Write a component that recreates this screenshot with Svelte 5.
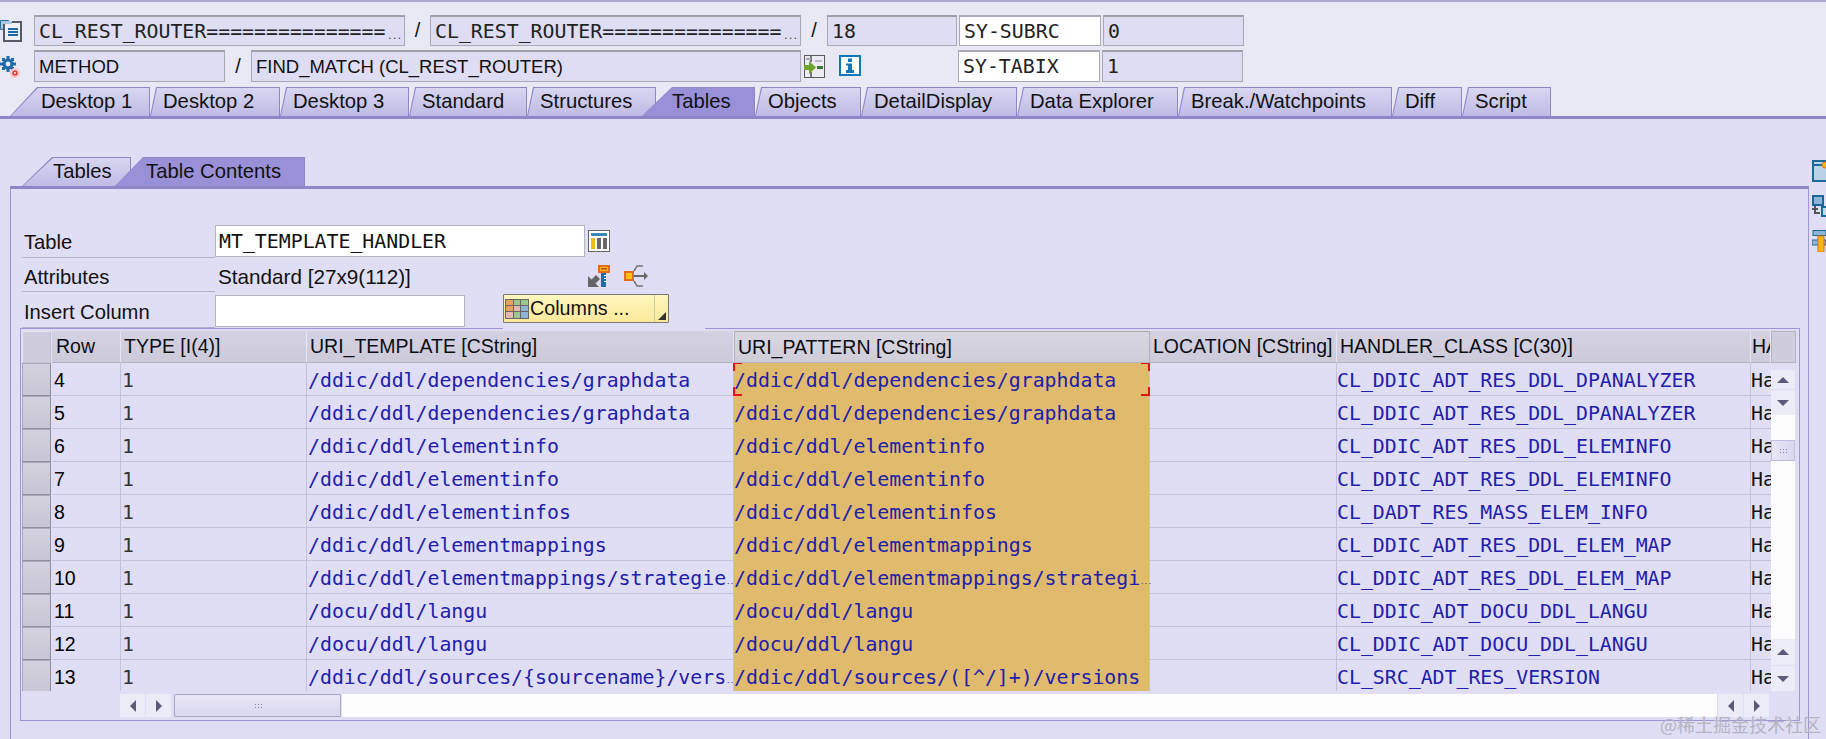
<script>
  const tabs = ['Desktop 1','Desktop 2','Desktop 3','Standard','Structures','Tables','Objects','DetailDisplay','Data Explorer','Break./Watchpoints','Diff','Script'];
  const columns = [
    { key: 'row', label: 'Row' },
    { key: 'type', label: 'TYPE [I(4)]' },
    { key: 'tpl', label: 'URI_TEMPLATE [CString]' },
    { key: 'pat', label: 'URI_PATTERN [CString]' },
    { key: 'loc', label: 'LOCATION [CString]' },
    { key: 'cls', label: 'HANDLER_CLASS [C(30)]' },
    { key: 'ha', label: 'HA' }
  ];
  const rows = [
    [4,'/ddic/ddl/dependencies/graphdata','/ddic/ddl/dependencies/graphdata','CL_DDIC_ADT_RES_DDL_DPANALYZER'],
    [5,'/ddic/ddl/dependencies/graphdata','/ddic/ddl/dependencies/graphdata','CL_DDIC_ADT_RES_DDL_DPANALYZER'],
    [6,'/ddic/ddl/elementinfo','/ddic/ddl/elementinfo','CL_DDIC_ADT_RES_DDL_ELEMINFO'],
    [7,'/ddic/ddl/elementinfo','/ddic/ddl/elementinfo','CL_DDIC_ADT_RES_DDL_ELEMINFO'],
    [8,'/ddic/ddl/elementinfos','/ddic/ddl/elementinfos','CL_DADT_RES_MASS_ELEM_INFO'],
    [9,'/ddic/ddl/elementmappings','/ddic/ddl/elementmappings','CL_DDIC_ADT_RES_DDL_ELEM_MAP'],
    [10,'/ddic/ddl/elementmappings/strategie.','/ddic/ddl/elementmappings/strategi.','CL_DDIC_ADT_RES_DDL_ELEM_MAP'],
    [11,'/docu/ddl/langu','/docu/ddl/langu','CL_DDIC_ADT_DOCU_DDL_LANGU'],
    [12,'/docu/ddl/langu','/docu/ddl/langu','CL_DDIC_ADT_DOCU_DDL_LANGU'],
    [13,'/ddic/ddl/sources/{sourcename}/vers.','/ddic/ddl/sources/([^/]+)/versions','CL_SRC_ADT_RES_VERSION']
  ];
  const cut = (s) => s.endsWith('.');
  const body = (s) => (cut(s) ? s.slice(0, -1) : s);
</script>

<div class="page">
  <header class="top">
    <div class="line one">
      <svg class="ic i1" width="22" height="22" viewBox="0 0 22 22"><path d="M0.500 0.500h8l-6 9h-2z" fill="#a9c9e4" stroke="#2a6f9e"/><rect x="4" y="2" width="17" height="19" fill="#f0f0f6" stroke="#555a66" stroke-width="2"/><rect x="3" y="1" width="9" height="3" fill="#a9c9e4"/><rect x="8" y="8" width="10" height="2" fill="#1f6aa8"/><rect x="8" y="11" width="10" height="2" fill="#1f6aa8"/><rect x="8" y="14" width="10" height="2" fill="#1f6aa8"/></svg>
      <div class="f w371">CL_REST_ROUTER===============<i>...</i></div>
      <span class="sl s1">/</span>
      <div class="f w371">CL_REST_ROUTER===============<i>...</i></div>
      <span class="sl s2">/</span>
      <div class="f w130">18</div>
      <div class="f w142 white">SY-SUBRC</div>
      <div class="f w141">0</div>
    </div>
    <div class="line two">
      <svg class="ic i2" width="22" height="24" viewBox="0 0 22 24"><g fill="#1f6aa8"><circle cx="8" cy="8" r="5.500"/><rect x="6.500" y="0" width="3" height="16"/><rect x="0" y="6.500" width="16" height="3"/><rect x="2" y="2" width="3" height="3"/><rect x="11" y="2" width="3" height="3"/><rect x="2" y="11" width="3" height="3"/><rect x="11" y="11" width="3" height="3"/></g><circle cx="8" cy="8" r="2.400" fill="#e9e8f5"/><circle cx="15" cy="17" r="5" fill="#f6c6c6"/><circle cx="15" cy="17" r="2.600" fill="#d42a2a"/><path d="M13.800 17h2.400M15 15.800v2.400" stroke="#fff"/></svg>
      <div class="f w191">METHOD</div>
      <span class="sl s3">/</span>
      <div class="f w551 sans">FIND_MATCH (CL_REST_ROUTER)</div>
      <svg class="ic2" width="21" height="23" viewBox="0 0 21 23"><rect x="0.500" y="0.500" width="20" height="22" fill="#ececf2" stroke="#5a5a5a"/><path d="M7 1v6M7 17v5" stroke="#777" stroke-width="2"/><path d="M2 4h5" stroke="#aaa" stroke-width="2"/><rect x="11" y="5" width="7" height="2" fill="#bbb"/><rect x="13" y="11" width="6" height="3" fill="#3c7a3c"/><path d="M0 10h5V6l7 6.500-7 6.500v-4H0z" fill="#6fa52c"/></svg>
      <svg class="ic3" width="22" height="21" viewBox="0 0 22 21"><rect x="1" y="1" width="20" height="19" fill="#fff" stroke="#0f78bd" stroke-width="2"/><rect x="9" y="3.500" width="4" height="3.500" fill="#0f78bd"/><path d="M7 8.500h6V15h2v3H7v-3h2v-4.500H7z" fill="#0f78bd"/></svg>
      <div class="f w142 white gap87">SY-TABIX</div>
      <div class="f w141">1</div>
    </div>
  </header>

  <nav class="tabs">
    {#each tabs as t, i}
      <div class="tab" class:first={i===0} class:active={t==='Tables'}><span>{t}</span></div>
    {/each}
  </nav>
  <div class="rule"></div>

  <main class="body">
    <div class="left">
      <div class="subtabs">
        <div class="tab first"><span>Tables</span></div>
        <div class="tab active"><span>Table Contents</span></div>
      </div>
      <section class="panel">
        <div class="form">
          <div class="lab">Table</div>
          <div class="formcell">
            <div class="input w371b">MT_TEMPLATE_HANDLER</div>
            <svg class="tblic" width="22" height="22" viewBox="0 0 22 22"><rect x="0.500" y="0.500" width="21" height="21" fill="#fff" stroke="#666"/><rect x="3" y="3" width="16" height="3" fill="#3d87b8"/><rect x="3" y="8" width="4" height="11" fill="#f6b914"/><rect x="9" y="8" width="4" height="11" fill="#666"/><rect x="15" y="8" width="4" height="11" fill="#666"/></svg>
          </div>
          <div class="lab">Attributes</div>
          <div class="formcell">
            <span class="attr">Standard [27x9(112)]</span>
            <svg class="keyic" width="22" height="22" viewBox="0 0 22 22"><path d="M0 22V11l3.500 3.500L8 10l4 4-4.500 4.500L11 22z" fill="#666"/><rect x="11" y="1" width="10" height="6" fill="#f6b914" stroke="#e36b1e" stroke-width="2"/><rect x="13" y="3" width="6" height="1.500" fill="#b5501a"/><rect x="13" y="8" width="5" height="14" fill="#1f6aa8"/><path d="M16 10.500h2M16 13.500h2M16 16.500h2" stroke="#fff"/></svg>
            <svg class="arrowic" width="24" height="22" viewBox="0 0 24 22"><rect x="1" y="7" width="8" height="8" fill="#f6c414" stroke="#e36b1e" stroke-width="2"/><path d="M10 10h10V7l4 4-4 4v-3H10z" fill="#666"/><path d="M10 6l3-5h6M10 16l3 5h6" fill="none" stroke="#777" stroke-width="1.500"/></svg>
          </div>
          <div class="lab">Insert Column</div>
          <div class="formcell">
            <div class="input w250"></div>
            <div class="colbtn">
              <svg width="24" height="20" viewBox="0 0 24 20"><rect width="24" height="20" fill="#666"/><g fill="#e9a15b"><rect x="1" y="1" width="7" height="5"/><rect x="1" y="7" width="7" height="5"/></g><g fill="#9cc68e"><rect x="9" y="1" width="6" height="5"/><rect x="16" y="1" width="7" height="5"/></g><g fill="#e6b8b0"><rect x="9" y="7" width="6" height="5"/><rect x="1" y="13" width="7" height="6"/></g><g fill="#8eb4d6"><rect x="16" y="7" width="7" height="5"/><rect x="16" y="13" width="7" height="6"/></g><rect x="9" y="13" width="6" height="6" fill="#9cc68e"/></svg>
              <span>Columns ...</span>
              <b class="drop"></b>
            </div>
          </div>
        </div>

        <div class="group">
          <div class="gridwrap">
            <div class="table">
              <div class="thead">
                <div class="sel h"></div>
                {#each columns as c}
                  <div class="th {c.key}">{c.label}</div>
                {/each}
              </div>
              <div class="tbody">
                {#each rows as r, i}
                  <div class="tr">
                    <div class="sel"></div>
                    <div class="td row">{r[0]}</div>
                    <div class="td type mono">1</div>
                    <div class="td tpl mono blue">{body(r[1])}{#if cut(r[1])}<small>...</small>{/if}</div>
                    <div class="td pat mono blue">{body(r[2])}{#if cut(r[2])}<small>...</small>{/if}{#if i===0}<em class="c tl"></em><em class="c tr2"></em><em class="c bl"></em><em class="c br"></em>{/if}</div>
                    <div class="td loc"></div>
                    <div class="td cls mono blue">{r[3]}</div>
                    <div class="td ha mono">Ha</div>
                  </div>
                {/each}
              </div>
            </div>
            <div class="hscroll">
              <div class="sb"><b class="al"></b></div>
              <div class="sb"><b class="ar"></b></div>
              <div class="thumb"><i></i></div>
              <div class="track"></div>
              <div class="sb"><b class="al"></b></div>
              <div class="sb"><b class="ar"></b></div>
            </div>
          </div>
          <aside class="vscroll">
            <div class="vhead"></div>
            <div class="vb up"><b class="au"></b></div>
            <div class="vb dn"><b class="ad"></b></div>
            <div class="vtrack"><div class="vthumb"><i></i></div></div>
            <div class="vb up"><b class="au"></b></div>
            <div class="vb dn"><b class="ad"></b></div>
          </aside>
        </div>
      </section>
    </div>
    <aside class="side">
      <svg width="14" height="22" viewBox="0 0 14 22"><rect x="1" y="1" width="20" height="20" fill="#b9d2e8" stroke="#1a6a98" stroke-width="2"/><rect x="1" y="4" width="9" height="2" fill="#1a6a98"/><circle cx="13" cy="5" r="3" fill="#f6b914" stroke="#e36b1e"/></svg>
      <svg width="14" height="22" viewBox="0 0 14 22"><rect x="1" y="1" width="10" height="9" fill="#8fb3d9" stroke="#1a6a98" stroke-width="2"/><path d="M0 14h6M3 11v7h5" stroke="#555" stroke-width="2" fill="none"/><rect x="10" y="12" width="6" height="9" fill="#c4d8ea" stroke="#1a6a98" stroke-width="2"/></svg>
      <svg width="14" height="22" viewBox="0 0 14 22"><rect x="1" y="0.500" width="13" height="5" fill="#8fb3d9" stroke="#1a6a98"/><rect x="0" y="10" width="14" height="5" fill="#8fb3d9" stroke="#1a6a98"/><rect x="6" y="6" width="6" height="16" fill="#f6b914" stroke="#e36b1e"/></svg>
    </aside>
  </main>
  <div class="mark">@稀土掘金技术社区</div>
</div>

<style>
  :global(body){margin:0;background:#e0def5;overflow:hidden}
  .page{position:relative;width:1826px;height:739px;overflow:hidden;background:#e0def5;font-family:"Liberation Sans",Arial,sans-serif;font-size:18px;color:#111;display:flex;flex-direction:column}
  .mono{font-family:"DejaVu Sans Mono",monospace;font-size:19.85px}

  .top{background:#e9e8f5;border-top:2px solid #b0a9d0;height:87px;box-sizing:border-box;padding-top:13px;display:flex;flex-direction:column;gap:4px;flex:none}
  .line{display:flex;align-items:stretch}
  .one{height:31px}
  .two{height:32px}
  .ic,.ic2,.ic3{flex:none}
  .ic{margin-right:12px}
  .i1{margin-top:5px}
  .i2{margin-top:6px}
  .f{box-sizing:border-box;height:100%;background:#dfddf3;border:1px solid #a9a8b6;border-top:2px solid #a0a0a8;padding-left:4px;display:flex;align-items:center;font-family:"DejaVu Sans Mono",monospace;font-size:19.85px;white-space:nowrap;color:#222;overflow:hidden;flex:none}
  .f i{font-style:normal;font-size:8px;align-self:flex-end;margin:0 0 4px 2px}
  .white{background:#fff;margin-left:2px;border-color:#a9a8b6}
  .w371{width:371px}
  .w130{width:130px}
  .w142{width:142px}
  .w141{width:141px;margin-left:2px}
  .w191{width:191px;font-family:"Liberation Sans",sans-serif;font-size:18.5px;color:#111}
  .w551{width:550px}
  .sans{font-family:"Liberation Sans",sans-serif;font-size:18.5px;color:#111}
  .sl{flex:none;display:flex;align-items:center;justify-content:center;font-size:20px}
  .s1{width:25px}
  .s2,.s3{width:26px}
  .ic2{margin:5px 0 0 3px}
  .ic3{margin:5px 0 0 14px}
  .gap87{margin-left:97px}

  .tabs{display:grid;grid-template-columns:140px 130px 129px 118px 129px 99px 106px 156px 161px 214px 70px 89px;padding-left:10px;height:29px;flex:none;background:#e9e8f5}
  .tab{position:relative;display:flex;align-items:center;padding-left:13px;white-space:nowrap;font-size:20.25px}
  .tab span{position:relative;z-index:2}
  .tab::before,.tab::after{content:"";position:absolute;inset:0;clip-path:polygon(0 100%,6px 0,100% 0,100% 100%)}
  .tab::before{background:#8f86c8}
  .tab::after{background:linear-gradient(#d8d6f0,#bfbbe6);inset:1px 1px 0 1px}
  .tab.first{padding-left:31px}
  .tab.first::before,.tab.first::after{clip-path:polygon(0 100%,27px 0,100% 0,100% 100%)}
  .tab.active{padding-left:16px;z-index:2}
  .tab.active::before,.tab.active::after{left:-14px;clip-path:polygon(0 100%,30px 0,100% 0,100% 100%)}
  .tab.active::after{background:#9a90d8}
  .rule{height:3px;background:#8f86c8;flex:none}

  .body{display:flex;flex:1;min-height:0}
  .left{margin-left:10px;width:1799px;flex:none;display:flex;flex-direction:column;padding-top:38px;box-sizing:border-box}
  .subtabs{display:grid;grid-template-columns:109px 174px;padding-left:12px;height:29px;flex:none}
  .subtabs .tab.first{padding-left:31px}
  .subtabs .tab.active{padding-left:31px;margin-left:-16px}
  .subtabs .tab.first::before,.subtabs .tab.first::after{clip-path:polygon(0 100%,30px 0,100% 0,100% 100%)}
  .subtabs .tab.active::before,.subtabs .tab.active::after{left:0;clip-path:polygon(0 100%,28px 0,100% 0,100% 100%)}
  .panel{flex:1;border-top:3px solid #8f86c8;border-left:1px solid #9c95d6;border-right:1px solid #9c95d6;padding:36px 9px 0 9px;box-sizing:border-box}
  .form{display:grid;grid-template-columns:193px 1fr;margin-left:2px}
  .lab{display:flex;align-items:center;border-bottom:1px solid #b5b3c8;box-sizing:border-box;font-size:20.2px;padding-left:2px}
  .lab:nth-child(1){height:33px;padding-top:2px}
  .lab:nth-child(3){height:34px;padding-top:5px}
  .lab:nth-child(5){height:36px;padding-top:6px}
  .formcell{display:flex;align-items:flex-start}
  .input{box-sizing:border-box;background:#fff;border:1px solid #b5b5c0;height:32px;display:flex;align-items:center;padding-left:3px;font-family:"DejaVu Sans Mono",monospace;font-size:19.85px;flex:none}
  .w371b{width:370px}
  .w250{width:250px;margin-top:3px}
  .tblic{margin:5px 0 0 3px;flex:none}
  .attr{width:367px;flex:none;margin:7px 0 0 3px;font-size:20.7px}
  .keyic{margin:7px 0 0 3px;flex:none}
  .arrowic{margin:7px 0 0 14px;flex:none}
  .colbtn{box-sizing:border-box;width:166px;height:29px;margin:2px 0 0 38px;display:flex;align-items:center;gap:1px;padding-left:1px;background:linear-gradient(#fff7bf,#fbe89a);border:1px solid #777;position:relative;z-index:2;font-size:19.7px;border-radius:1px;flex:none}
  .drop{position:absolute;right:0;top:0;bottom:0;width:13px;border-left:1px solid #c9cf9a}
  .drop::after{content:"";position:absolute;right:2px;bottom:2px;border:4px solid transparent;border-right-color:#333;border-bottom-color:#333}

  .group{position:relative;display:flex;border:1px solid #9c95d6;height:393px;box-sizing:border-box;padding:2px 2px 0 1px;width:1780px}
  .group::before{content:"";position:absolute;left:482px;width:202px;top:-1px;height:1px;background:#e0def5}
  .gridwrap{flex:none;width:1749px;display:flex;flex-direction:column}
  .table{height:360px;overflow:hidden}
  .thead,.tr{display:grid;grid-template-columns:30px 69px 186px 427px 416px 187px 414px 20px}
  .thead{height:32px}
  .tbody{height:328px;overflow:hidden}
  .tr{height:33px}
  .sel{background:linear-gradient(#d4d2de,#c8c6d4);border:1px solid #a9a8b8;border-right-color:#8f8fa0;border-bottom-color:#8f8fa0;box-sizing:border-box;margin-right:1px}
  .sel.h{background:#cfcddc;border-color:#c4c2d2;border-left-color:#e6e5ee;border-top-color:#e6e5ee}
  .th{box-sizing:border-box;background:linear-gradient(#d4d2e2,#cdcbda);border-right:1px solid #e6e5f0;border-bottom:1px solid #b5b3c8;display:flex;align-items:center;padding-left:3px;white-space:nowrap;overflow:hidden;font-size:19.5px;color:#0c0c14}
  .th.pat{background:linear-gradient(#d8d6e0,#cfcdd8);border:1px solid #b4b2c0;border-top-color:#aaa}
  .th.row{padding-left:4px}
  .th.ha{padding-left:1px}
  .td{box-sizing:border-box;border-right:1px solid #c4c2da;border-bottom:1px solid #c4c2da;display:flex;align-items:center;white-space:nowrap;overflow:hidden;padding:2px 0 0 1px;position:relative}
  .td.row{font-size:19.5px;color:#000;padding-left:2px}
  .td.type{color:#333}
  .td.ha{border-right:none;color:#111;padding-left:0}
  .td.cls{padding-left:0}
  .blue{color:#2020aa}
  .td small{font-size:6.5px;align-self:flex-end;margin:0 0 7px 0;letter-spacing:0}
  .td.pat{background:#e0bb6e;border-bottom:1px solid #e0bb6e;overflow:visible;padding-left:0}
  .c{position:absolute;width:7px;height:7px;border:0 solid #e01616}
  .tl{left:-1px;top:-1px;border-width:2px 0 0 2px}
  .tr2{right:-1px;top:-1px;border-width:2px 2px 0 0}
  .bl{left:-1px;bottom:-1px;border-width:0 0 2px 2px}
  .br{right:-1px;bottom:-1px;border-width:0 2px 2px 0}

  .hscroll{display:flex;height:23px;margin:3px 2px 0 98px;gap:1px}
  .sb{width:25px;background:#ecebf8;display:flex;align-items:center;justify-content:center;flex:none}
  .thumb{width:167px;margin-left:2px;background:linear-gradient(#e8e6f6,#d9d7ee);border:1px solid #a9a6c8;box-sizing:border-box;flex:none;display:flex;align-items:center;justify-content:center;border-radius:1px}
  .thumb i,.vthumb i{display:block;width:8px;height:6px;background:radial-gradient(circle,#8a88a8 1px,transparent 1px) 0 0/3px 3px}
  .track{flex:1;background:#fdfdfe}
  .al,.ar,.au,.ad{display:block;width:0;height:0;border:5px solid transparent}
  .al{border-right:6px solid #5b5a78;border-left:0;border-top-width:6px;border-bottom-width:6px}
  .ar{border-left:6px solid #5b5a78;border-right:0;border-top-width:6px;border-bottom-width:6px}
  .au{border-bottom:6px solid #5b5a78;border-top:0;border-left-width:6px;border-right-width:6px}
  .ad{border-top:6px solid #5b5a78;border-bottom:0;border-left-width:6px;border-right-width:6px}

  .vscroll{flex:none;width:25px;display:flex;flex-direction:column}
  .vhead{height:32px;background:#cfcddc;border:1px solid #b4b2c4;box-sizing:border-box;flex:none}
  .vb{background:#ecebf8;flex:none;display:flex;align-items:center;justify-content:center;width:24px}
  .vscroll .up:nth-child(2){height:19px;margin-top:7px}
  .vscroll .dn:nth-child(3){height:25px;margin-top:1px}
  .vscroll .up:nth-child(5){height:26px}
  .vscroll .dn:nth-child(6){height:25px;margin-top:1px}
  .vtrack{height:224px;background:#fdfdfe;padding-top:25px;box-sizing:border-box;width:24px;flex:none}
  .vthumb{height:21px;background:linear-gradient(90deg,#e8e6f6,#d9d7ee);border:1px solid #c0bee0;box-sizing:border-box;display:flex;align-items:center;justify-content:center}

  .side{flex:1;display:flex;flex-direction:column;padding:41px 0 0 3px;gap:13px;overflow:hidden}
  .mark{position:absolute;left:1660px;top:711px;font-family:"Noto Sans CJK SC",sans-serif;font-size:18px;color:#b4b4c2;white-space:nowrap}
</style>
